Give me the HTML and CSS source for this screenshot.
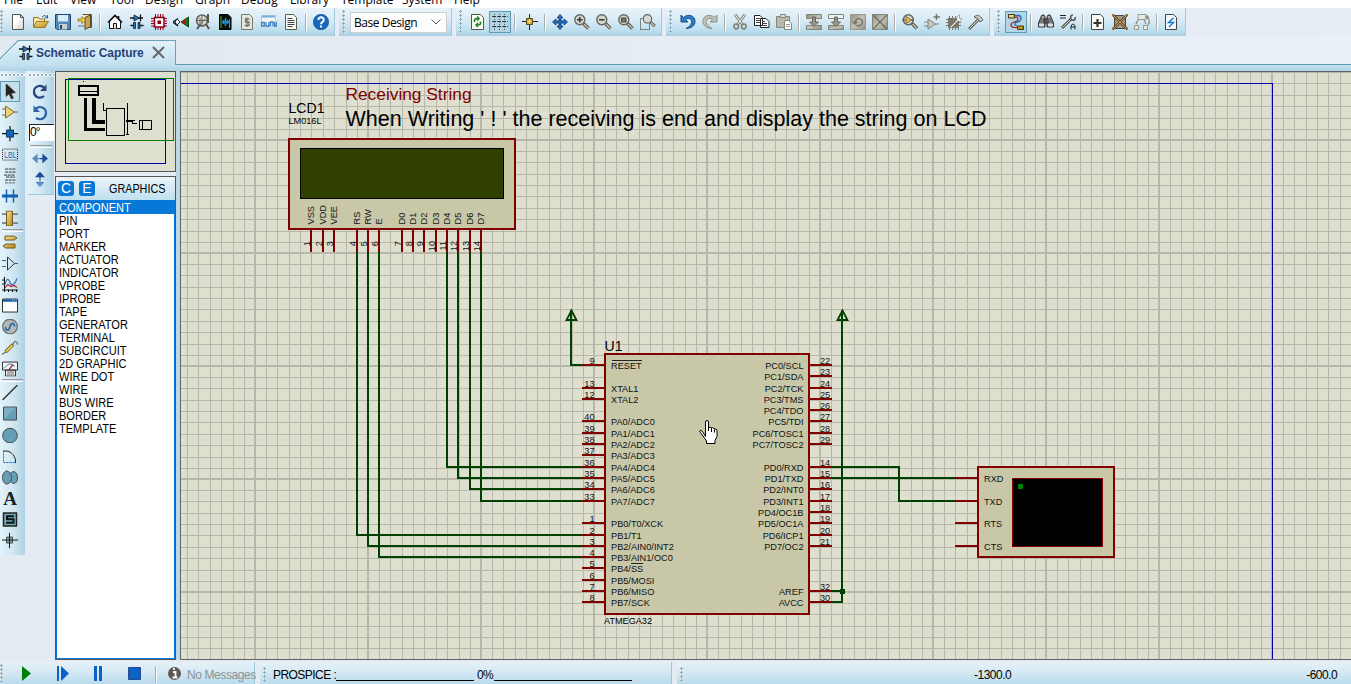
FILE: index.html
```html
<!DOCTYPE html>
<html lang="en">
<head>
<meta charset="utf-8">
<title>Schematic Capture</title>
<link rel="stylesheet" href="styles.css">
</head>
<body>
<svg class="defs" width="0" height="0">
  <defs>
    <linearGradient id="gold" x1="0" y1="0" x2="1" y2="1"><stop offset="0" stop-color="#f5e09a"/><stop offset="1" stop-color="#b8860b"/></linearGradient>
    <linearGradient id="paper" x1="0" y1="0" x2="1" y2="1"><stop offset="0.4" stop-color="#fff"/><stop offset="1" stop-color="#cfcfc4"/></linearGradient>
    <linearGradient id="grey" x1="0" y1="0" x2="1" y2="1"><stop offset="0" stop-color="#8f8f83"/><stop offset=".5" stop-color="#c2c2b6"/><stop offset="1" stop-color="#8f8f83"/></linearGradient>
  </defs>
  <symbol id="new" viewBox="0 0 16 16"><path d="M1.500 .5h8l3 3v12h-11z" fill="url(#paper)" stroke="#55554a"/><path d="M9.500 .5v3h3" fill="none" stroke="#55554a"/></symbol>
  <symbol id="open" viewBox="0 0 16 16"><path d="M.5 13V3.500h5l1 1.500h5v3" fill="#f8e7a8" stroke="#a07818"/><path d="M.5 13.500l3-6h12l-3.500 6z" fill="url(#gold)" stroke="#a07818"/><path d="M9 3q3-3 5 .5M14.500 1v3h-3" fill="none" stroke="#2e5f93"/></symbol>
  <symbol id="save" viewBox="0 0 16 16"><path d="M.5 .5h15v15H2l-1.500-1.500z" fill="#5288b8" stroke="#23466e"/><path d="M3 1h10v6.500H3z" fill="#d5eef7"/><path d="M4 10h8v5.500H4z" fill="#c9ccd0"/><path d="M5 11h2v4H5z" fill="#23466e"/></symbol>
  <symbol id="exit" viewBox="0 0 16 16"><path d="M5.500 .5h9v13h-3" fill="#e8e8e0" stroke="#6b552a"/><path d="M8 3.500L13.500 1v11.500L8 15.500z" fill="#c7a455" stroke="#5c4318"/><path d="M1 5h4V2.500L8.500 6 5 9.500V7H1z" fill="#f8d840" stroke="#8a6a10" stroke-width=".8"/><path d="M1 12h6" stroke="#75756a"/></symbol>
  <symbol id="home" viewBox="0 0 16 16"><path d="M2.500 7.500v7h11v-7L8 2z" fill="#fff" stroke="#111"/><path d="M1 8.500L8 1.500l7 7M11.500 2v3" fill="none" stroke="#111" stroke-width="1.600"/><path d="M6.500 14.500V9.500h3v5" fill="#efe4b5" stroke="#111"/></symbol>
  <symbol id="sch" viewBox="0 0 16 16"><path d="M1 4h13M1.500 11.500h3M11 11.500h3.500M11.500 .5v7" stroke="#151515" stroke-width="1.300"/><path d="M5 1v6l5.500-3z" fill="#2876bd" stroke="#101820" stroke-width=".8"/><path d="M4.500 8.500H6.500v6H4.500zM9 8.500h2v6H9z" fill="#2876bd" stroke="#101820" stroke-width=".8"/></symbol>
  <symbol id="pcb" viewBox="0 0 16 16"><path d="M4.500 0v16M7 0v16M9.500 0v16M12 0v16M0 4.500h16M0 7h16M0 9.500h16M0 12h16" stroke="#a00018"/><path d="M3.500 3.500h9.500v9.500H3.500z" fill="#fff" stroke="#8b0014" stroke-width="1.500"/><path d="M6.500 6.500h3.500v3.500H6.500z" fill="#8b0014"/></symbol>
  <symbol id="view3d" viewBox="0 0 16 16"><path d="M0 8L5 4.500M0 8l5 4M3 6v4" stroke="#111" stroke-width="1.400" fill="none"/><path d="M4 5l3 3-3 3-2-3z" fill="#fff" stroke="#234"/><path d="M8 8l7.500-5v10z" fill="#087a18" stroke="#085010"/><path d="M8.500 8l3.500-2.500v5z" fill="#b51010"/></symbol>
  <symbol id="gerber" viewBox="0 0 16 16"><circle cx="7" cy="6.500" r="5.500" fill="#d9dedb" stroke="#66665c" stroke-width="1.600"/><path d="M1 6.500h12M7 1v12M5 4v7l5-6" stroke="#66665c" fill="none"/><path d="M2 15l3-4M11 10l3 5M13 0v9" stroke="#55554b" stroke-width="2"/></symbol>
  <symbol id="explorer" viewBox="0 0 16 16"><path d="M2.500 .5h8.500l3 3v12H2.500z" fill="#061006" stroke="#000"/><path d="M4 2v12M12.500 5v9" stroke="#55a835"/><path d="M8.500 4v8M6.500 6v4M10.500 6v4M5 8h7" stroke="#1593e8" stroke-width="1.500"/></symbol>
  <symbol id="bom" viewBox="0 0 16 16"><path d="M2.500 .5h8l3 3v12h-11z" fill="#e6e6dc" stroke="#77776c"/><path d="M10.500 5H6.500v3h3.500v3.500H5.500M8 3.500V13" stroke="#77776c" stroke-width="1.300" fill="none"/></symbol>
  <symbol id="code" viewBox="0 0 16 16"><path d="M.5 1.500h14v11H.5z" fill="#f2f4ee" stroke="#b8cfdb"/><path d="M1 2.500h13" stroke="#71b1e2" stroke-width="2"/><path d="M.7 8.500h2.600v3.500H.7zM5 8v4h3V8M9.500 12V8h2.500v4M13.500 8v4h2V8" fill="none" stroke="#3d83c5" stroke-width="1.300"/></symbol>
  <symbol id="notes" viewBox="0 0 16 16"><path d="M2.500 .5h8l3 3v12h-11z" fill="#f8f8f2" stroke="#5a5a50"/><path d="M4.500 4.500h5M4.500 6.500h7M4.500 8.500h7M4.500 10.500h7M4.500 12.500h5" stroke="#444"/></symbol>
  <symbol id="help" viewBox="0 0 16 16"><circle cx="8" cy="8" r="7.700" fill="#1768bd" stroke="#0c4380" stroke-width=".6"/><path d="M5.300 6C5.300 2.300 10.900 2.500 10.700 6 10.600 8 8 8 8 10.200" fill="none" stroke="#fff" stroke-width="2"/><path d="M7 11.500h2v2H7z" fill="#fff"/></symbol>
  <symbol id="redraw" viewBox="0 0 16 16"><path d="M1.500 .5h9l3 3v12h-12z" fill="#f8f8f0" stroke="#55554a"/><path d="M4.500 8V6q0-1.500 4-1.500M7 2.500l2 2-2 2M10.500 7.500v2q0 1.500-4 1.500M8 9l-2 2 2 2" fill="none" stroke="#168025" stroke-width="1.500"/></symbol>
  <symbol id="grid" viewBox="0 0 16 16"><path d="M0 2.500h16M0 7.500h16M0 12.500h16M2.500 0v16M7.500 0v16M12.500 0v16" stroke="#49565c" stroke-dasharray="1 1.500"/><path d="M1 2.500h3M6 2.500h3M11 2.500h3M1 7.500h3M6 7.500h3M11 7.500h3M1 12.500h3M6 12.500h3M11 12.500h3" stroke="#333"/></symbol>
  <symbol id="origin" viewBox="0 0 16 16"><path d="M0 7.500h16M7.500 0v16" stroke="#222"/><path d="M4.500 4.500h6v6h-6z" fill="#c79e2c" stroke="#5c4a18"/><path d="M5 7.500h5M7.500 5v5" stroke="#f8e59a"/></symbol>
  <symbol id="pan" viewBox="0 0 16 16"><path d="M8 .5l3 3.500H9v3h3V5l3.500 3-3.500 3V9H9v3h2l-3 3.500L5 12h2V9H4v2L.5 8 4 5v2h3V4H5z" fill="#1c70cc" stroke="#12345c" stroke-width=".8"/></symbol>
  <symbol id="lens" viewBox="0 0 16 16"><path d="M9.500 9.500l5 5" stroke="#555047" stroke-width="3.400"/><path d="M10 10l4.500 4.500" stroke="#d2cdbb" stroke-width="1.300"/><circle cx="5.800" cy="5.800" r="5" fill="#d6d9d3" stroke="#66665c" stroke-width="1.400"/></symbol>
  <symbol id="zin" viewBox="0 0 16 16"><use href="#lens"/><path d="M3 5.800h5.600M5.800 3v5.600" stroke="#333" stroke-width="1.500"/></symbol>
  <symbol id="zout" viewBox="0 0 16 16"><use href="#lens"/><path d="M3 5.800h5.600" stroke="#333" stroke-width="1.500"/></symbol>
  <symbol id="zall" viewBox="0 0 16 16"><use href="#lens"/><path d="M3.500 4h4.500v4H3.500z" fill="#77776d" stroke="#444"/></symbol>
  <symbol id="zarea" viewBox="0 0 16 16"><path d="M.5 4.500h9v11h-9z" fill="none" stroke="#222" stroke-dasharray="1 1"/><g transform="translate(2.500 0) scale(.85)"><use href="#lens" width="16" height="16"/></g></symbol>
  <symbol id="undo" viewBox="0 0 16 16"><path d="M1 1v7h7L5.500 5.500C9 3 12 5 11.500 8.500 11.300 11 9 13 6 14.500c6-.5 9-3 9-7.500C15 1.500 8-.5 3.500 3.500z" fill="#2f7cc8" stroke="#174d89"/></symbol>
  <symbol id="redo" viewBox="0 0 16 16"><path transform="translate(16 0) scale(-1 1)" d="M1 1v7h7L5.500 5.500C9 3 12 5 11.500 8.500 11.300 11 9 13 6 14.500c6-.5 9-3 9-7.500C15 1.500 8-.5 3.500 3.500z" fill="#bfc1b6" stroke="#8d9087"/></symbol>
  <symbol id="cut" viewBox="0 0 16 16"><path d="M3 .5l7.500 10M13 .5L5.500 10.500" stroke="#77776d" stroke-width="2.800"/><path d="M3 .5l7.500 10M13 .5L5.500 10.500" stroke="#eceee8" stroke-width="1.100"/><circle cx="4.200" cy="12.500" r="2.300" fill="none" stroke="#85857a" stroke-width="1.700"/><circle cx="11.800" cy="12.500" r="2.300" fill="none" stroke="#85857a" stroke-width="1.700"/></symbol>
  <symbol id="copy" viewBox="0 0 16 16"><path d="M.5 1.500h5.500l2.500 2.500v7.500h-8zM6.500 4.500H12l3 3v6H6.500z" fill="#fff" stroke="#222"/><path d="M2 4.500h4M2 6.500h4M2 8.500h4M8 7.500h3M8 9.500h5M8 11.500h5" stroke="#444"/></symbol>
  <symbol id="paste" viewBox="0 0 16 16"><path d="M.5 2.500h13v11H.5z" fill="#b8b8ac" stroke="#85857a"/><path d="M4.500 .5h5v3h-5z" fill="#ddd" stroke="#85857a"/><path d="M8.500 6.500h4l3 3v6h-7z" fill="#fff" stroke="#85857a"/><path d="M10 10.500h4M10 12.500h4" stroke="#99998e"/></symbol>
  <symbol id="bcopy" viewBox="0 0 16 16"><path d="M.5 .5h15v4H.5zM.5 11.500h15v4H.5z" fill="url(#grey)" stroke="#85857a"/><path d="M6.500 3h3v5h3L8 12.500 3.500 8h3z" fill="#96968a" stroke="#69695f"/></symbol>
  <symbol id="bmove" viewBox="0 0 16 16"><path d="M.5 .5h15v4H.5z" fill="#eaf3f5" stroke="#85857a"/><path d="M.5 11.500h15v4H.5z" fill="url(#grey)" stroke="#85857a"/><path d="M6.500 3h3v5h3L8 12.500 3.500 8h3z" fill="#96968a" stroke="#69695f"/></symbol>
  <symbol id="brot" viewBox="0 0 16 16"><path d="M.5 .5h15v15H.5z" fill="url(#grey)" stroke="#99998c"/><path d="M5 9.500c0-8 9-5 7 0-1 2-4 3-6 1.500M2.500 7.500L5 10l2.500-2.500" fill="none" stroke="#77776c" stroke-width="1.500"/></symbol>
  <symbol id="bdel" viewBox="0 0 16 16"><path d="M.5 .5h15v15H.5z" fill="url(#grey)" stroke="#85857a"/><path d="M1 1l14 14M15 1L1 15" stroke="#6c6c61" stroke-width="1.300"/></symbol>
  <symbol id="pick" viewBox="0 0 16 16"><g transform="translate(.5 0)"><use href="#lens"/></g><path d="M0 6h12" stroke="#494432"/><path d="M4 2.500v7L9.500 6z" fill="#e4c050" stroke="#7a6828" stroke-width=".8"/></symbol>
  <symbol id="make" viewBox="0 0 16 16"><path d="M0 8h4M0 12h4M11 10h4M4 5v10l7.500-5z" fill="#bfc8c5" stroke="#85857a"/><path d="M12.500 0v6M9.500 3h6.500" stroke="#77776c" stroke-width="1.500"/></symbol>
  <symbol id="pack" viewBox="0 0 16 16"><path d="M3.500 2v14M6.500 2v14M9.500 2v14M12.500 3v13M0 5.500h15M0 8.500h15M0 11.500h15" stroke="#77776c"/><path d="M2 4h11v10H2z" fill="#77776b"/><path d="M4 13l7-7c-1-3 1-5 3-5l-1 3 2 1 1-1c0 3-2 4-4 3l-7 7z" fill="#f4f4ee" stroke="#77776c" stroke-width=".6"/></symbol>
  <symbol id="decomp" viewBox="0 0 16 16"><path d="M1 15L11 5" stroke="#67675d" stroke-width="3"/><path d="M1.500 14.500L11 5" stroke="#ccd0c9" stroke-width="1"/><path d="M6 3c3-3 6-2 9 3l-3 2-3-4z" fill="#c5c9c4" stroke="#67675d"/></symbol>
  <symbol id="autor" viewBox="0 0 16 16"><path d="M7 3.500q3-1 3 1.500T6 8q-3 1-3 3t3 2.500h3" fill="none" stroke="#ba1616" stroke-width="1.200"/><path d="M7 1.500h3q3 0 3 2.500t-3 4q-3 0-3 1.500V11q0 .5 2 .5" fill="none" stroke="#2173c8" stroke-width="1.400"/><path d="M.5 .5h6v3.500h-6zM9.500 12h6v3.500h-6z" fill="url(#gold)" stroke="#443410"/></symbol>
  <symbol id="find" viewBox="0 0 16 16"><path d="M3 3l1-2h2l1 2v10H.5V9zM13 3l-1-2h-2L9 3v10h6.500V9zM6 5h4v4H6z" fill="#777a78" stroke="#333"/><path d="M1.500 10h4v2h-4zM10.500 10h4v2h-4zM4 3h2M10 3h2" fill="#dce1de" stroke="#dce1de"/></symbol>
  <symbol id="prop" viewBox="0 0 16 16"><path d="M0 1.500h6M0 4h6" stroke="#222"/><path d="M2 14L11 5" stroke="#55554c" stroke-width="3"/><path d="M2.500 13.500L11 5" stroke="#d8dcd8"/><path d="M13 1c-3 0-3 4-1 5s4-1 3-3" fill="none" stroke="#55554c" stroke-width="1.500"/><path d="M11 15.500V12l1.500-2h1l1.500 2v3.500M11 13h4" fill="none" stroke="#222"/></symbol>
  <symbol id="sheet" viewBox="0 0 16 16"><path d="M1.500 .5h9l3 3v12h-12z" fill="#fafaf4" stroke="#444"/><path d="M7.500 5v8M3.500 9h8" stroke="#333" stroke-width="2.200"/></symbol>
  <symbol id="delsheet" viewBox="0 0 16 16"><path d="M2.500 1.500h9l2 2v11h-11z" fill="#9b9b88" stroke="#444"/><path d="M0 0l16 16M16 0L0 16" stroke="#473019" stroke-width="2.400"/><path d="M0 0l16 16M16 0L0 16" stroke="#d39a4a" stroke-width="1.100"/></symbol>
  <symbol id="goto" viewBox="0 0 16 16"><path d="M4 .5h8v5H4zM.5 11.500h4v4h-4zM9.500 11.500h4v4h-4z" fill="#e8eae4" stroke="#99998e"/><path d="M4 6l-2 4M10 6l2 4M13 3q4 4 1 8M11 3h4M13 1v4" fill="none" stroke="#8d8d82" stroke-width="1.300"/></symbol>
  <symbol id="erc" viewBox="0 0 16 16"><path d="M1.500 .5h8l3 3v12h-11z" fill="#f4f7f5" stroke="#444"/><path d="M9.500 4L4.500 8.500h5L5 13" fill="none" stroke="#1378d5" stroke-width="1.400"/></symbol>

  <symbol id="arrow" viewBox="0 0 16 16"><path d="M4 0v13l3-2.500L9.500 15.500l2-1-2.300-4.500L13.500 9z" fill="#222" stroke="#444" stroke-width=".6"/></symbol>
  <symbol id="comp" viewBox="0 0 16 16"><path d="M0 4.500h4M0 10.500h4M11 7.500h5" stroke="#666"/><path d="M3.500 1.500v12l9-6z" fill="#eed06c" stroke="#806a28"/></symbol>
  <symbol id="junction" viewBox="0 0 16 16"><path d="M0 8h16M8 0v16" stroke="#111" stroke-width="1.200"/><path d="M4.500 4.500h7v7h-7z" fill="#0f65b8" stroke="#083962"/></symbol>
  <symbol id="lbl" viewBox="0 0 16 16"><path d="M.5 2.500h15v11H.5z" fill="none" stroke="#222" stroke-dasharray="1 1"/><text x="2" y="11.500" font-family="Liberation Sans, sans-serif" font-size="9" textLength="12.500" lengthAdjust="spacingAndGlyphs" fill="#1868b8">LBL</text></symbol>
  <symbol id="script" viewBox="0 0 16 16"><path d="M3 1.500h11M3 4.500h11M2 7.500h11M4 9.500h9M3 12.500h11M3 15.500h10" stroke="#333" stroke-dasharray="3 .7"/></symbol>
  <symbol id="bus" viewBox="0 0 16 16"><path d="M0 7.500h16" stroke="#0d63b5" stroke-width="3"/><path d="M4.500 1v13M11.500 1v13" stroke="#0d63b5" stroke-width="1.500"/></symbol>
  <symbol id="sub" viewBox="0 0 16 16"><path d="M0 3.500h4M0 12.500h4M11 3.500h5M11 12.500h5" stroke="#333"/><path d="M4.500 .5h6v15h-6z" fill="url(#gold)" stroke="#715920"/></symbol>
  <symbol id="term" viewBox="0 0 16 16"><path d="M3 1.500h9l3 2-3 2H3zM13 9.500H4l-3 2 3 2h9z" fill="url(#gold)" stroke="#715920"/></symbol>
  <symbol id="pin" viewBox="0 0 16 16"><path d="M0 5h4M0 11h4M12 8h4" stroke="#2065a8"/><path d="M5.500 1.500v13l7-6.500z" fill="#d8e9ee" stroke="#333"/></symbol>
  <symbol id="graph" viewBox="0 0 16 16"><path d="M2.500 0v16M0 13.500h16M0 3.500h3M0 7.500h3M6.500 13v3M10.500 13v3M14.500 13v3" stroke="#111"/><path d="M3 8C5 0 7 3 8 6s4 4 7-4" fill="none" stroke="#3476b7" stroke-width="1.300"/><path d="M3 11l3-3 3 2 3-1 3 2" fill="none" stroke="#b12b37" stroke-width="1.300"/></symbol>
  <symbol id="popup" viewBox="0 0 16 16"><path d="M.5 1.500h15v13H.5z" fill="#fff" stroke="#333"/><path d="M1 3h14" stroke="#165ea6" stroke-width="2.400"/><path d="M10 2.500h5" stroke="#aad8ef" stroke-dasharray="1 1"/></symbol>
  <symbol id="gen" viewBox="0 0 16 16"><circle cx="8" cy="8" r="7.300" fill="#b5b9b6" stroke="#6b716d" stroke-width="1.300"/><path d="M3.500 8.500c0 4 3.500 4 4.300 0s4.700-5 4.700-.5" fill="none" stroke="#1563b2" stroke-width="1.500"/></symbol>
  <symbol id="probe" viewBox="0 0 16 16"><path d="M0 15l4-3M11 5c1-4 4-4 4.500 0" fill="none" stroke="#333"/><path d="M3.500 12.500L11 5" stroke="#71591b" stroke-width="3.400"/><path d="M4 12l6.500-6.500" stroke="#f2d65a" stroke-width="1.800"/></symbol>
  <symbol id="meter" viewBox="0 0 16 16"><path d="M.5 1.500h15v8H.5zM3.500 9.500h10v6h-10z" fill="#f3f6f2" stroke="#333"/><path d="M2 8q5-8 11-2" fill="none" stroke="#3d8bbd"/><path d="M7 9l4-5" stroke="#a11" stroke-width="1.300"/><path d="M5 11.500h7M5 13.500h7" stroke="#666"/></symbol>
  <symbol id="line" viewBox="0 0 16 16"><path d="M.5 15.500l15-15" stroke="#333" stroke-width="1.500"/></symbol>
  <symbol id="box" viewBox="0 0 16 16"><path d="M1.500 1.500h13v13h-13z" fill="#659fb5" stroke="#444b4c"/><path d="M2 2h12L2 14z" fill="#8cb9c9" opacity=".6"/></symbol>
  <symbol id="circle" viewBox="0 0 16 16"><circle cx="8" cy="8" r="7.300" fill="#659fb5" stroke="#444b4c"/></symbol>
  <symbol id="arc" viewBox="0 0 16 16"><path d="M1.500 2v12h12" fill="none" stroke="#176cc2" stroke-dasharray="2 1"/><path d="M1.500 2.500c7-1 11 4 12 9v3" fill="none" stroke="#222"/></symbol>
  <symbol id="path" viewBox="0 0 16 16"><path d="M8 4C6-1 .5 2 .5 8s5 9 8 4c4 4 7 1 7-4S12 0 8 4z" fill="#659fb5" stroke="#444b4c"/><path d="M8 4c2 2 2 6 0 8" fill="none" stroke="#444b4c"/></symbol>
  <symbol id="sym" viewBox="0 0 16 16"><path d="M1.500 1.500h13v13h-13z" fill="#6faebf" stroke="#222" stroke-width="1.500"/><path d="M12 4.800H5v3h6.500v3.500H4" fill="none" stroke="#111" stroke-width="2"/></symbol>
  <symbol id="marker" viewBox="0 0 16 16"><path d="M4.500 4.500h6v6h-6z" fill="#83a9a7" stroke="#405051"/><path d="M0 7.500h16M7.500 0v16" stroke="#222"/></symbol>
  <symbol id="cw" viewBox="0 0 16 16"><path d="M12 12.500C8 16 1.800 13.500 2 8c.2-5.500 6.500-7.500 10.500-3.500" fill="none" stroke="#24477f" stroke-width="2.200"/><path d="M14.500 1v6.500H8z" fill="#24477f"/></symbol>
  <symbol id="ccw" viewBox="0 0 16 16"><path d="M4 13.500c5 3 10 0 10-5.500C13.800 3 7.500.5 3.500 4.500" fill="none" stroke="#2c63a6" stroke-width="2.200"/><path d="M1.500 1v6.500H8z" fill="#2c63a6"/></symbol>
  <symbol id="fliph" viewBox="0 0 16 16"><path d="M8 8H3M5 4.500L1 8l4 3.500z" stroke="#5b8dbb" fill="#5b8dbb" stroke-width="1.300"/><path d="M8 8h5M11 4.500L15 8l-4 3.500z" stroke="#234c96" fill="#234c96" stroke-width="1.300"/></symbol>
  <symbol id="flipv" viewBox="0 0 16 16"><path d="M8 8V3M4.500 5L8 1l3.500 4z" stroke="#234c96" fill="#234c96" stroke-width="1.300"/><path d="M8 8v4M4.500 11L8 15l3.500-4z" stroke="#4b7db4" fill="#6b9fce"/></symbol>
</svg>

<div class="app">
  <nav class="menu"><span>File</span><span>Edit</span><span>View</span><span>Tool</span><span>Design</span><span>Graph</span><span>Debug</span><span>Library</span><span>Template</span><span>System</span><span>Help</span></nav>

  <div class="toolbars">
    <div class="bar first"><i class="grip"></i>
      <svg class="ic"><use href="#new"/></svg><svg class="ic"><use href="#open"/></svg><svg class="ic"><use href="#save"/></svg><svg class="ic"><use href="#exit"/></svg><i class="sep"></i>
      <svg class="ic"><use href="#home"/></svg><svg class="ic"><use href="#sch"/></svg><svg class="ic"><use href="#pcb"/></svg><svg class="ic"><use href="#view3d"/></svg><svg class="ic"><use href="#gerber"/></svg><svg class="ic"><use href="#explorer"/></svg><svg class="ic"><use href="#bom"/></svg><svg class="ic"><use href="#code"/></svg><svg class="ic"><use href="#notes"/></svg><i class="sep"></i>
      <svg class="ic"><use href="#help"/></svg></div>
    <div class="bar design"><i class="grip"></i><div class="combo"><span>Base Design</span><svg width="10" height="6"><path d="M.5 .5L5 5 9.500 .5" fill="none" stroke="#555"/></svg></div></div>
    <div class="bar"><i class="grip"></i>
      <svg class="ic"><use href="#redraw"/></svg><svg class="ic on"><use href="#grid"/></svg><i class="sep"></i><svg class="ic"><use href="#origin"/></svg><i class="sep"></i>
      <svg class="ic"><use href="#pan"/></svg><svg class="ic"><use href="#zin"/></svg><svg class="ic"><use href="#zout"/></svg><svg class="ic"><use href="#zall"/></svg><svg class="ic"><use href="#zarea"/></svg></div>
    <div class="bar"><i class="grip"></i>
      <svg class="ic"><use href="#undo"/></svg><svg class="ic"><use href="#redo"/></svg><i class="sep"></i>
      <svg class="ic"><use href="#cut"/></svg><svg class="ic"><use href="#copy"/></svg><svg class="ic"><use href="#paste"/></svg><i class="sep"></i>
      <svg class="ic"><use href="#bcopy"/></svg><svg class="ic"><use href="#bmove"/></svg><svg class="ic"><use href="#brot"/></svg><svg class="ic"><use href="#bdel"/></svg><i class="sep"></i>
      <svg class="ic"><use href="#pick"/></svg><svg class="ic"><use href="#make"/></svg><svg class="ic"><use href="#pack"/></svg><svg class="ic"><use href="#decomp"/></svg></div>
    <div class="bar"><i class="grip"></i>
      <svg class="ic on"><use href="#autor"/></svg><i class="sep"></i><svg class="ic"><use href="#find"/></svg><svg class="ic"><use href="#prop"/></svg><i class="sep"></i>
      <svg class="ic"><use href="#sheet"/></svg><svg class="ic"><use href="#delsheet"/></svg><svg class="ic"><use href="#goto"/></svg><i class="sep"></i><svg class="ic"><use href="#erc"/></svg></div>
  </div>

  <div class="tabs">
    <div class="tab"><svg class="tabic"><use href="#sch"/></svg><span>Schematic Capture</span><svg class="close" width="13" height="13"><path d="M1 1l11 11M12 1L1 12" stroke="#66666a" stroke-width="2"/></svg></div>
    <div class="tabline"></div>
  </div>
  <div class="band"></div>

  <main class="work">
    <div class="modes">
      <i class="hgrip"></i>
      <svg class="m on"><use href="#arrow"/></svg><svg class="m"><use href="#comp"/></svg><svg class="m"><use href="#junction"/></svg><svg class="m"><use href="#lbl"/></svg><svg class="m"><use href="#script"/></svg><svg class="m"><use href="#bus"/></svg><svg class="m"><use href="#sub"/></svg><i class="hsep"></i>
      <svg class="m"><use href="#term"/></svg><svg class="m"><use href="#pin"/></svg><svg class="m"><use href="#graph"/></svg><svg class="m"><use href="#popup"/></svg><svg class="m"><use href="#gen"/></svg><svg class="m"><use href="#probe"/></svg><svg class="m"><use href="#meter"/></svg><i class="hsep"></i>
      <svg class="m"><use href="#line"/></svg><svg class="m"><use href="#box"/></svg><svg class="m"><use href="#circle"/></svg><svg class="m"><use href="#arc"/></svg><svg class="m"><use href="#path"/></svg><span class="m letter">A</span><svg class="m"><use href="#sym"/></svg><svg class="m"><use href="#marker"/></svg>
    </div>
    <div class="orient">
      <i class="hgrip"></i>
      <svg class="m"><use href="#cw"/></svg><svg class="m"><use href="#ccw"/></svg>
      <div class="angle">0°</div><i class="hsep"></i>
      <svg class="m"><use href="#fliph"/></svg><svg class="m"><use href="#flipv"/></svg>
    </div>
    <aside class="side">
      <svg class="preview" viewBox="56 72 119 99" shape-rendering="crispEdges">
        <path d="M65.500 79.500h100v84h-100z" fill="none" stroke="#0000a8"/>
        <path d="M68.500 78.500h105v62h-105z" fill="none" stroke="#008000"/>
        <g fill="none" stroke="#000"><path d="M79 86h19v9H79z" stroke-width="2"/><path d="M78 91.500h20M106.500 108.500h18v27h-18zM103.500 103v7h2M127.500 103v32M126 134.500h3M126 121.500h6v2h5"/><path d="M85.500 98v31.500H105" stroke-width="3"/><path d="M94 98v23.500h11" stroke-width="4"/><path d="M139.500 120.500h12v9h-12z" stroke-width="1.500"/><path d="M142.500 121v8M126 120.500h9M83 81.500h1"/></g>
      </svg>
      <section class="picker">
        <header><b>C</b><b>E</b><span>GRAPHICS</span></header>
        <ul><li class="sel"><span>COMPONENT</span></li><li><span>PIN</span></li><li><span>PORT</span></li><li><span>MARKER</span></li><li><span>ACTUATOR</span></li><li><span>INDICATOR</span></li><li><span>VPROBE</span></li><li><span>IPROBE</span></li><li><span>TAPE</span></li><li><span>GENERATOR</span></li><li><span>TERMINAL</span></li><li><span>SUBCIRCUIT</span></li><li><span>2D GRAPHIC</span></li><li><span>WIRE DOT</span></li><li><span>WIRE</span></li><li><span>BUS WIRE</span></li><li><span>BORDER</span></li><li><span>TEMPLATE</span></li></ul>
      </section>
    </aside>
    <div class="splitter"></div>
    <svg class="sheet" viewBox="181 72 1170 587">
      <defs>
        <pattern id="gridp" x="28" y="26" width="113" height="113" patternUnits="userSpaceOnUse">
          <path shape-rendering="crispEdges" fill="#b7b8a9" d="M0 0h2v113H0zM12 0h1v113h-1zM23 0h1v113h-1zM35 0h1v113h-1zM46 0h1v113h-1zM57 0h1v113h-1zM69 0h1v113h-1zM80 0h1v113h-1zM92 0h1v113h-1zM103 0h1v113h-1zM0 0h113v2H0zM0 12h113v1H0zM0 23h113v1H0zM0 35h113v1H0zM0 46h113v1H0zM0 57h113v1H0zM0 69h113v1H0zM0 80h113v1H0zM0 92h113v1H0zM0 103h113v1H0z"/>
        </pattern>
      </defs>
      <rect x="181" y="72" width="1170" height="587" fill="#dedfcf"/>
      <rect x="181" y="72" width="1170" height="587" fill="url(#gridp)"/>
      <path d="M181 83.500H1272.500V659" class="edge"/>
      <g class="wire">
        <path d="M357 252V535H583M368 252V546H583M379 252V557H583M447 252V467H583M458 252V478H583M470 252V489H583M481 252V501H583"/>
        <path d="M571 310V365H583M842 310V602H831M831 591H842M831 467H899V501H955M831 478H955"/>
      </g>
      <path class="tri" d="M571.500 310.500l5 9.500h-10zM842.500 310.500l5 9.500h-10z"/>
      <path d="M840 589h5v5h-5z" fill="#004000"/>
      <g class="body">
        <path d="M289 139H515V229H289zM605 354H809V614H605zM978 467H1114V557H978z"/>
      </g>
      <rect x="300.500" y="148.500" width="203" height="50" fill="#304000" stroke="#000"/>
      <rect x="1012.500" y="478.500" width="90" height="68" fill="#000" stroke="#800000"/>
      <path d="M1018 484h5v5h-5z" fill="#008000"/>
      <g id="pins"></g>
      <path d="M612 360.500h30M631 563.500h12" class="over"/>
      <g class="txt">
        <text x="345.500" y="100" font-size="17" textLength="126" lengthAdjust="spacingAndGlyphs" fill="#800000">Receiving String</text>
        <text x="345.500" y="126" font-size="22" textLength="641" lengthAdjust="spacingAndGlyphs">When Writing ' ! ' the receiving is end and display the string on LCD</text>
        <text x="288.500" y="113" font-size="14" textLength="36" lengthAdjust="spacingAndGlyphs">LCD1</text>
        <text x="288.500" y="124" font-size="9.500" textLength="33" lengthAdjust="spacingAndGlyphs">LM016L</text>
        <text x="604.500" y="351" font-size="14" textLength="18">U1</text>
        <text x="604" y="624" font-size="9.500" textLength="48" lengthAdjust="spacingAndGlyphs">ATMEGA32</text>
      </g>
      <path d="M705.500 436.500V422q0-1.500 1.500-1.500T708.500 422v5.500q2-1 2.500 .5 2-1 3 .8 2.500-.5 3 1.700v6l-2 4v3h-8.500v-2.500l-3.500-5q-3-4-3.500-5 1-1.500 3 .5z" fill="#fff" stroke="#000"/>
      <path d="M708.500 427v4M711.500 428v4M714.500 429.500v3" stroke="#000"/>
    </svg>
  </main>

  <footer class="status">
    <div class="sbar transport"><i class="grip"></i>
      <svg width="258" height="22" viewBox="0 662 258 22"><path d="M22 666v15l9-7.500z" fill="#008000"/><path d="M57 666h2v15h-2zM61 666v15l8-7.500z" fill="#0a63c4"/><path d="M94 666h3v15h-3zM99 666h3v15h-3z" fill="#0a63c4"/><path d="M128.500 667.500h12v12h-12z" fill="#0a63c4" stroke="#254a91"/><path d="M155.500 666v17" stroke="#aaa"/><path d="M156.500 666v17" stroke="#fff"/><circle cx="174.500" cy="673.500" r="6.500" fill="#5e5854"/><path d="M173 672h2.500v5M172.500 677.500h5M174 668v2" fill="none" stroke="#fff" stroke-width="1.800"/></svg>
      <span class="msg">No Messages</span></div>
    <div class="sbar prospice"><i class="grip"></i><span>PROSPICE :</span><i class="rule"></i><span class="pct">0%</span><i class="rule"></i></div>
    <div class="sbar coords"><i class="grip"></i><span class="cx">-1300.0</span><span class="cy">-600.0</span></div>
  </footer>
</div>
<script src="script.js"></script>
</body>
</html>
```

FILE: styles.css
```css
* { box-sizing: border-box; }
body { margin: 0; width: 1351px; height: 684px; overflow: hidden; background: #e4ebf3; color: #000; font-family: "Liberation Sans", Arial, sans-serif; }
.defs { position: absolute; }
.app { display: flex; flex-direction: column; height: 684px; }
svg { display: block; flex: none; }

.menu { display: grid; grid-template-columns: 32px 34px 40px 35px 50px 46px 49px 51px 61px 52px 40px; grid-template-rows: 8px; height: 8px; padding-left: 4px; background: #fff; font: 12px/16px "Open Sans", "Noto Sans", sans-serif; align-items: end; }
.menu span { height: 16px; }

.toolbars { display: flex; gap: 4px; height: 28px; background: #e6edf5; }
.bar { display: flex; align-items: center; padding-right: 2px; border-right: 1px solid #a3c9dc; background: linear-gradient(#e9f3f9, #d8eaf5 45%, #b9dcec 85%, #a8cfe2); }
.bar.design { padding-right: 4px; }
.grip { flex: none; align-self: stretch; width: 11px; margin: 2px 0; background: radial-gradient(circle at 1.500px 1.500px, #93acb9 1.100px, #fff 1.500px, transparent 2px) 3px 0 / 4px 4px no-repeat; background-repeat: repeat-y; }
.first .grip { width: 8px; background-position: 0 0; }
.ic { width: 22px; height: 22px; padding: 3px; }
.ic.on { border: 1px solid #5d9cb8; padding: 2px; background: #b3d4e3; }
.sep { flex: none; width: 8px; height: 17px; background: linear-gradient(90deg, #aaa 50%, #fff 50%) 3px 0 / 2px 17px no-repeat; }
.combo { display: flex; align-items: center; justify-content: space-between; width: 97px; height: 21px; padding: 0 5px 0 3px; border: 1px solid #c8ced2; background: #fdfdfd; font: 12px "Open Sans", "Noto Sans", sans-serif; letter-spacing: -.45px; white-space: nowrap; }

.tabs { display: flex; height: 29px; padding-top: 4px; background: linear-gradient(90deg, #e2e9f1, #e9f0f8); }
.tab { display: flex; align-items: center; width: 176px; padding-left: 18px; background: linear-gradient(#6aa3b8, #6aa3b8) right / 1px 100% no-repeat, linear-gradient(#6aa3b8, #6aa3b8) top / 100% 1px no-repeat, linear-gradient(135deg, transparent 12.200px, #6aa3b8 12.300px, #6aa3b8 13.500px, transparent 13.600px), linear-gradient(#e4f2fa, #c1e0f0); clip-path: polygon(18px 0, 100% 0, 100% 100%, 0 100%, 0 18px); color: #27417b; font: bold 12px "Liberation Sans", sans-serif; letter-spacing: -.06px; white-space: nowrap; }
.tabic { width: 16px; height: 16px; margin-right: 2px; }
.tab span { width: 108px; }
.close { margin-left: 8px; }
.tabline { flex: 1; border-bottom: 1px solid #6099b0; }
.band { height: 6px; background: linear-gradient(#c3e0ef, #aed2e5); }

.work { display: flex; height: 589px; }
.modes, .orient { display: flex; flex-direction: column; background: linear-gradient(90deg, #e3f3fa, #d2e7f2 50%, #aed2e4); }
.modes { width: 25px; height: 484px; }
.orient { width: 26px; height: 124px; margin: 0 1px 0 3px; border-bottom: 1px solid #9cc6da; }
.hgrip { height: 10px; flex: none; background: radial-gradient(circle at 2px 2px, #92adba 1px, #fff 1.500px, transparent 2px) 0 2px / 4px 4px repeat-x; }
.m { flex: none; width: 20px; height: 21.100px; padding: 2.500px 2px; }
.orient .m { margin-left: 2px; }
.m.on { border: 1px solid #5d9cb8; background: #c4dfea; padding: 1.500px 1px; }
.hsep { flex: none; height: 3px; margin: 0 2px; border-top: 1px solid #999; border-bottom: 1px solid #fff; }
.letter { padding: 0; color: #222; font: bold 19px/21px "Liberation Serif", serif; text-align: center; }
.angle { width: 25px; height: 17px; margin: 1px 0 4px 1px; padding-left: 0; border-top: 1px solid #222; border-left: 1px solid #222; background: #fff; font-size: 12px; line-height: 15px; letter-spacing: -.8px; }

.side { width: 121px; display: flex; flex-direction: column; gap: 4px; }
.preview { width: 121px; height: 101px; border: 1px solid #555; background: #dedfcf; }
.picker { flex: 1; border: 1px solid #555; background: #fff; }
.picker header { display: flex; align-items: center; gap: 5px; height: 23px; padding-left: 2px; background: linear-gradient(#ecf4fa, #bfdff0); font-size: 12px; }
.picker b { width: 16px; height: 15px; border-radius: 3px; background: #0878d8; color: #fff; font: 14px/15px "Liberation Sans", sans-serif; text-align: center; }
.picker header span { margin-left: 9px; transform: scaleX(.9); transform-origin: left; }
.picker ul { height: 459px; margin: 0; padding: 0; border: solid #0878d8; border-width: 0 1px 1px; list-style: none; font-size: 12px; line-height: 14px; }
.picker li { height: 13px; padding-left: 2px; }
.picker li span { display: inline-block; transform: scaleX(.92); transform-origin: left; }
.picker li.sel { height: 14px; background: #0878d8; color: #fff; line-height: 16px; }
.splitter { width: 4px; background: #b9d7e7; }
.sheet { width: 1171px; height: 589px; border: solid #5f6468; border-width: 1px 0 1px 1px; }

.edge { fill: none; stroke: #0000a8; shape-rendering: crispEdges; }
.wire path { fill: none; stroke: #004000; stroke-width: 2; shape-rendering: crispEdges; }
.tri { fill: none; stroke: #004000; stroke-width: 1.800; }
.body path { fill: #c8c8a8; stroke: #800000; stroke-width: 2; shape-rendering: crispEdges; }
.pin { stroke: #800000; stroke-width: 2; shape-rendering: crispEdges; }
.over { stroke: #222; }
.txt text, .lab { font-family: "Liberation Sans", Arial, sans-serif; }
.lab { font-size: 9.200px; fill: #111; }

.status { display: flex; height: 24px; padding-top: 2px; background: #e4ebf3; font-size: 12px; }
.sbar { display: flex; align-items: center; background: linear-gradient(#e6f1f8, #d3e8f3 50%, #b9dbec); white-space: nowrap; }
.transport { width: 255px; border-right: 1px solid #9cc6da; }
.transport .grip { width: 8px; background-position: 0 0; }
.transport svg { margin-left: -8px; margin-right: -71px; }
.msg { color: #8b9295; font-size: 12px; letter-spacing: -.4px; padding-top: 3px; }
.prospice { width: 412px; margin-left: 5px; padding-top: 3px; border-right: 1px solid #9cc6da; letter-spacing: -.55px; }
.prospice span { margin-left: 2px; width: 60px; }
.prospice .pct { width: 14px; }
.rule { width: 138px; height: 1px; margin: 12px 1px 0 3px; background: #000; }
.coords { flex: 1; margin-left: 5px; padding-top: 3px; letter-spacing: -.5px; }
.cx { margin-left: 286px; }
.cy { margin-left: 295px; }
```

FILE: script.js
```javascript
const group = document.getElementById("pins");
const NS = "http://www.w3.org/2000/svg";

function add(tag, attrs, text) {
  const el = document.createElementNS(NS, tag);
  for (const key in attrs) el.setAttribute(key, attrs[key]);
  if (text) el.textContent = text;
  group.appendChild(el);
}

// Microcontroller pins: number, name, y
const left = [
  [9, "RESET", 365], [13, "XTAL1", 388], [12, "XTAL2", 399],
  [40, "PA0/ADC0", 421], [39, "PA1/ADC1", 433], [38, "PA2/ADC2", 444], [37, "PA3/ADC3", 455],
  [36, "PA4/ADC4", 467], [35, "PA5/ADC5", 478], [34, "PA6/ADC6", 489], [33, "PA7/ADC7", 501],
  [1, "PB0/T0/XCK", 523], [2, "PB1/T1", 535], [3, "PB2/AIN0/INT2", 546], [4, "PB3/AIN1/OC0", 557],
  [5, "PB4/SS", 568], [6, "PB5/MOSI", 580], [7, "PB6/MISO", 591], [8, "PB7/SCK", 602]
];
const right = [
  [22, "PC0/SCL", 365], [23, "PC1/SDA", 376], [24, "PC2/TCK", 388], [25, "PC3/TMS", 399],
  [26, "PC4/TDO", 410], [27, "PC5/TDI", 421], [28, "PC6/TOSC1", 433], [29, "PC7/TOSC2", 444],
  [14, "PD0/RXD", 467], [15, "PD1/TXD", 478], [16, "PD2/INT0", 489], [17, "PD3/INT1", 501],
  [18, "PD4/OC1B", 512], [19, "PD5/OC1A", 523], [20, "PD6/ICP1", 535], [21, "PD7/OC2", 546],
  [32, "AREF", 591], [30, "AVCC", 602]
];
for (const [num, name, y] of left) {
  add("path", { class: "pin", d: `M582 ${y}H604` });
  add("text", { class: "lab", x: 611, y: y + 4 }, name);
  add("text", { class: "lab", x: 594.5, y: y - 1, "text-anchor": "end" }, String(num));
}
for (const [num, name, y] of right) {
  add("path", { class: "pin", d: `M810 ${y}H832` });
  add("text", { class: "lab", x: 803.5, y: y + 4, "text-anchor": "end" }, name);
  add("text", { class: "lab", x: 820, y: y - 1 }, String(num));
}

// LCD pins: name, x
const lcd = [
  ["VSS", 311], ["VDD", 323], ["VEE", 334], ["RS", 357], ["RW", 368], ["E", 379], ["D0", 402],
  ["D1", 413], ["D2", 424], ["D3", 436], ["D4", 447], ["D5", 458], ["D6", 470], ["D7", 481]
];
lcd.forEach(([name, x], i) => {
  add("path", { class: "pin", d: `M${x} 230V252` });
  add("text", { class: "lab", transform: `translate(${x + 3} 224.5) rotate(-90)` }, name);
  add("text", { class: "lab", transform: `translate(${x - 1.5} 241) rotate(-90)`, "text-anchor": "end" }, String(i + 1));
});

// Serial terminal pins
for (const [name, y] of [["RXD", 478], ["TXD", 501], ["RTS", 523], ["CTS", 546]]) {
  add("path", { class: "pin", d: `M955 ${y}H977` });
  add("text", { class: "lab", x: 984, y: y + 4 }, name);
}
```
